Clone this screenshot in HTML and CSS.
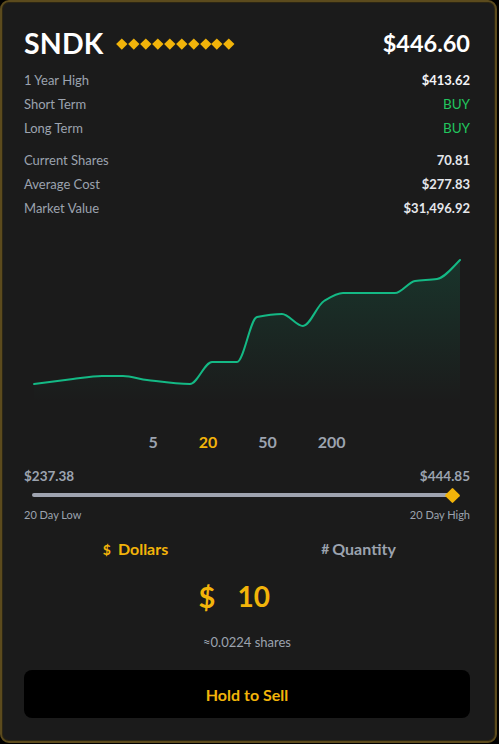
FILE: index.html
```html
<!DOCTYPE html>
<html lang="en">
<head>
<meta charset="utf-8">
<title>SNDK</title>
<link rel="stylesheet" href="styles.css">
</head>
<body>
<div class="card">
  <div class="header">
    <div class="title">
      <span class="ticker">SNDK</span>
      <span class="rating">
        <i></i><i></i><i></i><i></i><i></i><i></i><i></i><i></i><i></i><i></i>
      </span>
    </div>
    <span class="price">$446.60</span>
  </div>

  <div class="rows">
    <div class="row"><span class="label">1 Year High</span><span class="value">$413.62</span></div>
    <div class="row"><span class="label">Short Term</span><span class="value buy">BUY</span></div>
    <div class="row"><span class="label">Long Term</span><span class="value buy">BUY</span></div>
  </div>
  <div class="rows rows-second">
    <div class="row"><span class="label">Current Shares</span><span class="value soft">70.81</span></div>
    <div class="row"><span class="label">Average Cost</span><span class="value soft">$277.83</span></div>
    <div class="row"><span class="label">Market Value</span><span class="value soft">$31,496.92</span></div>
  </div>

  <svg class="chart" width="446" height="190" viewBox="0 0 446 190">
    <defs>
      <linearGradient id="fillGrad" x1="0" y1="0" x2="0" y2="1">
        <stop offset="0" stop-color="#10b981" stop-opacity="0.16"/>
        <stop offset="1" stop-color="#10b981" stop-opacity="0"/>
      </linearGradient>
    </defs>
    <path fill="url(#fillGrad)" d="M10,154 C23,152.3 36,150.6 49,149 C58.7,147.8 68.3,146 78,146 C85,146 92,146 99,146 C107,146 115,149 123,150 C137.3,151.7 151.7,154 166,154 C173.3,154 180.7,132 188,132 C196.3,132 204.7,132 213,132 C219.7,132 226.3,88.3 233,87 C241.3,85.3 249.7,84 258,84 C265,84 272,96 279,96 C286,96 293,75.2 300,71 C306.3,67.2 312.7,63 319,63 C328,63 337,63 346,63 C354.3,63 362.7,63 371,63 C377.7,63 384.3,52 391,51 C398.3,49.9 405.7,50.2 413,49 C420.7,47.8 428.3,37.7 436,30 L436,172 L10,172 Z"/>
    <path fill="none" stroke="#14b985" stroke-width="2" stroke-linecap="round" d="M10,154 C23,152.3 36,150.6 49,149 C58.7,147.8 68.3,146 78,146 C85,146 92,146 99,146 C107,146 115,149 123,150 C137.3,151.7 151.7,154 166,154 C173.3,154 180.7,132 188,132 C196.3,132 204.7,132 213,132 C219.7,132 226.3,88.3 233,87 C241.3,85.3 249.7,84 258,84 C265,84 272,96 279,96 C286,96 293,75.2 300,71 C306.3,67.2 312.7,63 319,63 C328,63 337,63 346,63 C354.3,63 362.7,63 371,63 C377.7,63 384.3,52 391,51 C398.3,49.9 405.7,50.2 413,49 C420.7,47.8 428.3,37.7 436,30"/>
  </svg>

  <div class="periods">
    <span class="period">5</span>
    <span class="period active">20</span>
    <span class="period">50</span>
    <span class="period">200</span>
  </div>

  <div class="range-values">
    <span>$237.38</span>
    <span>$444.85</span>
  </div>
  <div class="track-wrap">
    <div class="track"></div>
    <span class="thumb"></span>
  </div>
  <div class="range-labels">
    <span>20 Day Low</span>
    <span>20 Day High</span>
  </div>

  <div class="toggle">
    <div class="toggle-item active"><span class="sym">$</span>Dollars</div>
    <div class="toggle-item"><span class="sym hash">#</span>Quantity</div>
  </div>

  <div class="amount">
    <span class="amount-sym">$</span>
    <span class="amount-val">10</span>
  </div>

  <div class="shares">≈0.0224 shares</div>

  <button class="sell">Hold to Sell</button>
</div>
</body>
</html>
```

FILE: styles.css
```css
* { box-sizing: border-box; }
html, body {
  margin: 0;
  padding: 0;
  background: #000;
}
body {
  font-family: Lato, "Noto Sans", "Liberation Sans", sans-serif;
  color: #e5e7eb;
}
.card {
  width: 497px;
  height: 743px;
  background: #1b1b1b;
  border: 2px solid #5c4b1d;
  border-radius: 9px;
  box-shadow: inset 0 0 0 1px #2c2614;
  padding: 23px 25px 0 22px;
  display: flex;
  flex-direction: column;
}
.header {
  height: 36px;
  display: flex;
  align-items: center;
  justify-content: space-between;
  margin-bottom: 7px;
}
.title {
  display: flex;
  align-items: center;
}
.ticker {
  font-size: 28.5px;
  font-weight: 700;
  color: #fff;
  letter-spacing: 0.2px;
}
.rating {
  display: flex;
  align-items: center;
  gap: 4.4px;
  margin-left: 14px;
  margin-top: 1px;
}
.rating i {
  display: block;
  width: 7.6px;
  height: 7.6px;
  background: #f2b40a;
  transform: rotate(45deg);
}
.price {
  font-size: 23.5px;
  font-weight: 700;
  color: #fff;
}
.rows {
  display: flex;
  flex-direction: column;
}
.rows-second {
  margin-top: 8px;
}
.row {
  height: 24px;
  display: flex;
  align-items: center;
  justify-content: space-between;
  font-size: 13px;
}
.label {
  color: #9ca3af;
}
.value {
  font-weight: 700;
  color: #f3f4f6;
}
.value.soft {
  color: #e5e7eb;
}
.value.buy {
  color: #22c55e;
  font-weight: 400;
  font-size: 13.5px;
}
.chart {
  display: block;
  margin-top: 10px;
  overflow: visible;
}
.periods {
  margin-top: 8px;
  height: 26px;
  display: flex;
  justify-content: center;
  align-items: center;
  gap: 41px;
}
.period {
  font-size: 16px;
  font-weight: 700;
  color: #9ca3af;
}
.period.active {
  color: #f2b40a;
}
.range-values {
  margin-top: 14px;
  height: 16px;
  display: flex;
  justify-content: space-between;
  align-items: center;
  font-size: 13.5px;
  font-weight: 700;
  color: #9ca3af;
}
.track-wrap {
  margin-top: 3px;
  height: 16px;
  display: flex;
  align-items: center;
  position: relative;
  padding: 0 17px 0 8px;
}
.track {
  flex: 1;
  height: 4px;
  border-radius: 2px;
  background: #9fa4b0;
}
.thumb {
  position: absolute;
  right: 12px;
  top: 2.5px;
  width: 11px;
  height: 11px;
  background: #f2b40a;
  transform: rotate(45deg);
  border-radius: 1px;
}
.range-labels {
  margin-top: 4px;
  height: 14px;
  display: flex;
  justify-content: space-between;
  align-items: center;
  font-size: 11px;
  color: #9ca3af;
}
.toggle {
  margin-top: 15px;
  height: 24px;
  display: flex;
}
.toggle-item {
  flex: 1;
  display: flex;
  justify-content: center;
  align-items: center;
  font-size: 16px;
  font-weight: 700;
  color: #9ca3af;
}
.toggle-item.active {
  color: #f2b40a;
}
.sym {
  font-size: 14px;
  margin-right: 7px;
  margin-top: 2px;
}
.sym.hash {
  margin-right: 3px;
  margin-top: 0;
}
.amount {
  margin-top: 16px;
  height: 40px;
  display: flex;
  justify-content: center;
  align-items: center;
  color: #f2b40a;
  font-weight: 700;
}
.amount-sym {
  font-size: 29px;
  margin-right: 22px;
}
.amount-val {
  font-size: 28px;
  width: 58px;
}
.shares {
  margin-top: 18px;
  height: 16px;
  line-height: 16px;
  text-align: center;
  font-size: 13px;
  color: #9ca3af;
}
.sell {
  margin-top: 20px;
  height: 48px;
  width: 100%;
  border: 0;
  border-radius: 8px;
  background: #000;
  color: #f2b40a;
  font-family: inherit;
  font-size: 16px;
  font-weight: 700;
  cursor: pointer;
}
```
